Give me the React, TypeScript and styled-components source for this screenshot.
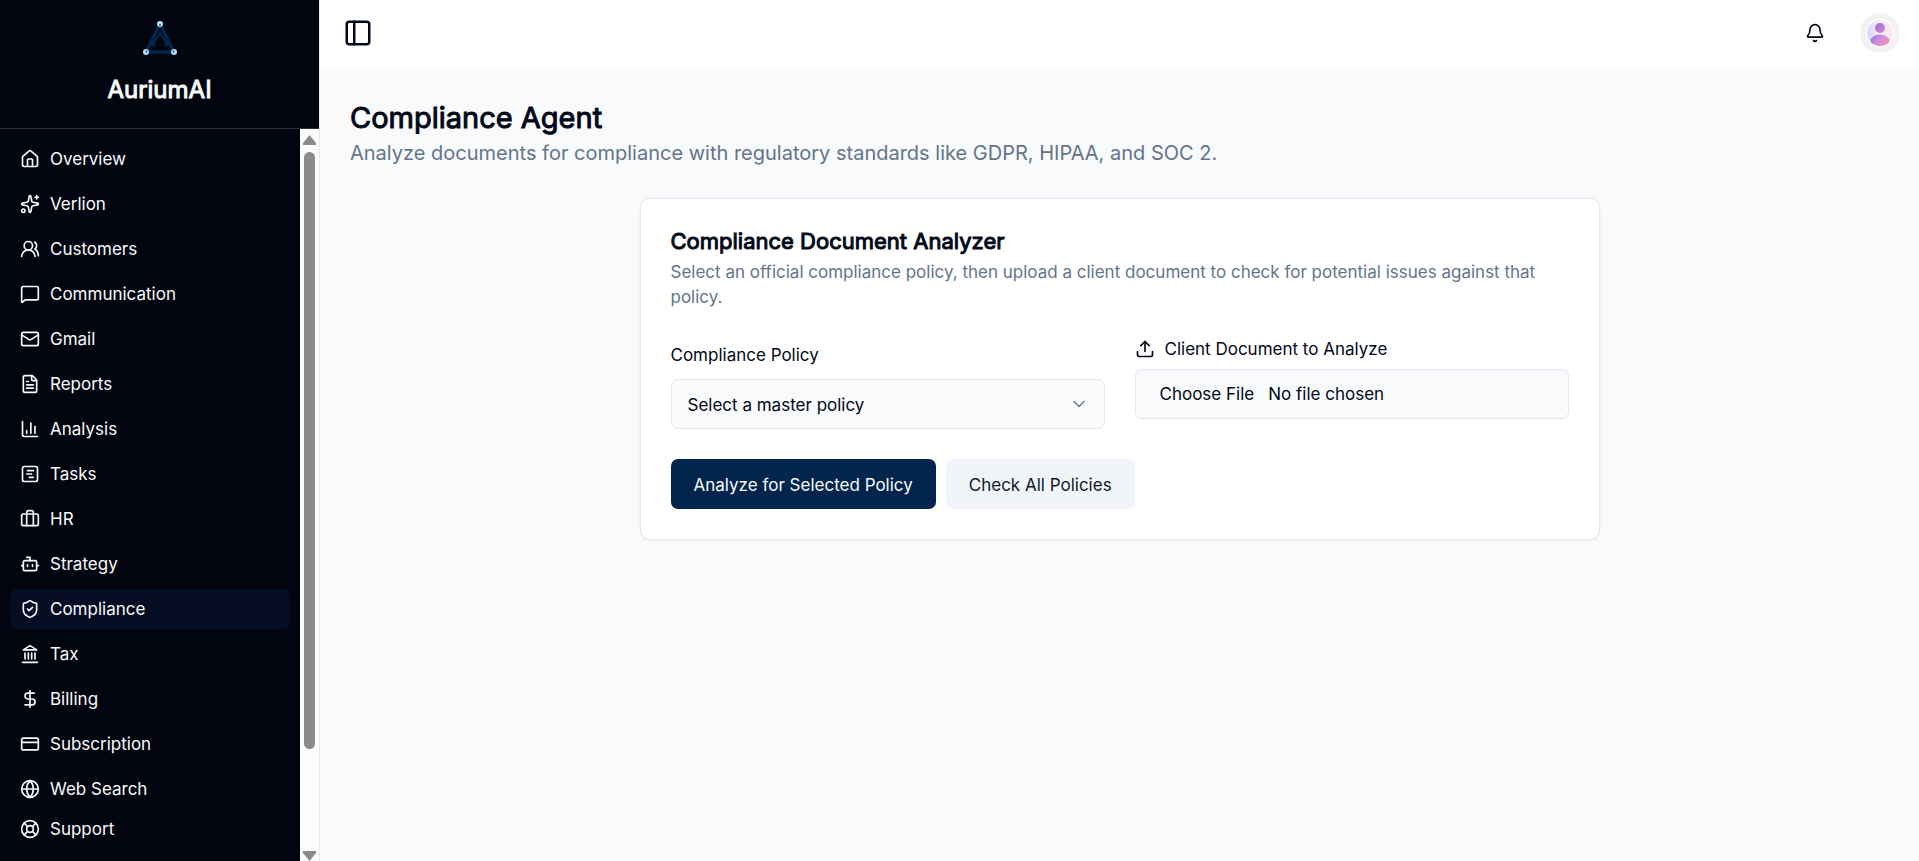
import React from "react";
import styled, { createGlobalStyle, css } from "styled-components";
import {
  Bell,
  Bot,
  Briefcase,
  ChartColumn,
  ChevronDown,
  CreditCard,
  DollarSign,
  FileText,
  Globe,
  House,
  LifeBuoy,
  Mail,
  MessageSquare,
  PanelLeft,
  ShieldCheck,
  Sparkles,
  SquareChartGantt,
  Upload,
  UsersRound,
} from "lucide-react";

const color = {
  ink: "#020817",
  muted: "#64748b",
  line: "#e2e8f0",
  page: "#f8fafc",
  navy: "#00254d",
  soft: "#f1f5f9",
  sidebar: "#02050f",
  active: "#050d22",
};

/* Headings are the regular cut thickened by an outline. */
const headingWeight = css`
  font-weight: 400;
  -webkit-text-stroke: 1px currentColor;
`;

const GlobalStyle = createGlobalStyle`
  *, *::before, *::after { box-sizing: border-box; }
  body {
    margin: 0;
    background: ${color.page};
    color: ${color.ink};
    font-family: Inter, "Liberation Sans", sans-serif;
    font-size: 17px;
    line-height: 25px;
  }
  button, input, select { font: inherit; color: inherit; }
  h1, h2, p, ul { margin: 0; padding: 0; }
`;

const Shell = styled.div`
  display: flex;
  height: 100vh;
  overflow: hidden;
`;

const Sidebar = styled.aside`
  display: flex;
  flex-direction: column;
  flex: none;
  width: 320px;
  background: ${color.sidebar};
  color: ${color.page};
  border-right: 1px solid ${color.line};
`;

const Brand = styled.div`
  display: flex;
  flex-direction: column;
  align-items: center;
  gap: 12px;
  padding: 20px 0 20px;
  height: 129px;
  flex: none;
  border-bottom: 1px solid #2b2e38;
`;

const BrandName = styled.span`
  font-size: 24px;
  line-height: 36px;
  ${headingWeight}
`;

const SidebarBody = styled.div`
  display: flex;
  flex: 1;
  min-height: 0;
`;

const Nav = styled.nav`
  flex: 1;
  min-width: 0;
  overflow: hidden;
  padding: 10px;
`;

const NavList = styled.ul`
  display: flex;
  flex-direction: column;
  gap: 5px;
  list-style: none;
`;

const NavLink = styled.a<{ $active?: boolean }>`
  display: flex;
  align-items: center;
  gap: 10px;
  height: 40px;
  padding: 0 10px;
  border-radius: 7px;
  line-height: 26px;
  color: inherit;
  text-decoration: none;
  background: ${(p) => (p.$active ? color.active : "transparent")};
`;

const ScrollTrack = styled.div`
  display: flex;
  flex-direction: column;
  align-items: center;
  flex: none;
  width: 19px;
  padding-top: 6px;
  background: #fcfcfc;
`;

const ScrollArrow = styled.svg`
  flex: none;
  width: 13px;
  height: 10px;
  fill: #8b8b8b;
`;

const ScrollThumb = styled.div`
  flex: none;
  width: 11px;
  height: calc(82% + 2px);
  margin: 7px 0 auto;
  border-radius: 6px;
  background: #8b8b8b;
`;

const Content = styled.div`
  display: flex;
  flex-direction: column;
  flex: 1;
  min-width: 0;
`;

const TopBar = styled.header`
  display: flex;
  align-items: center;
  justify-content: space-between;
  height: 67px;
  flex: none;
  padding: 0 19px 1px 23px;
  background: #fff;
`;

const TopActions = styled.div`
  display: flex;
  align-items: center;
  gap: 25px;
`;

const IconButton = styled.button<{ $size: number }>`
  display: grid;
  place-items: center;
  width: ${(p) => p.$size}px;
  height: ${(p) => p.$size}px;
  padding: 0;
  border: 0;
  border-radius: 50%;
  background: transparent;
  cursor: pointer;
`;

const Main = styled.main`
  flex: 1;
  padding: 30px;
  overflow: hidden;
`;

const PageTitle = styled.h1`
  font-size: 29px;
  line-height: 42px;
  ${headingWeight}
`;

const PageLead = styled.p`
  font-size: 20px;
  line-height: 28px;
  color: ${color.muted};
`;

const Card = styled.section`
  max-width: 960px;
  margin: 31px auto 0;
  padding: 30px;
  border: 1px solid ${color.line};
  border-radius: 10px;
  background: #fff;
  box-shadow: 0 1px 3px rgba(0, 0, 0, 0.06);
`;

const CardTitle = styled.h2`
  font-size: 22px;
  line-height: 24px;
  ${headingWeight}
`;

const CardText = styled.p`
  margin-top: 7px;
  color: ${color.muted};
`;

const Fields = styled.div`
  display: grid;
  grid-template-columns: 1fr 1fr;
  align-items: start;
  gap: 30px;
  margin-top: 24px;
`;

const Field = styled.div`
  display: flex;
  flex-direction: column;
`;

const Label = styled.label<{ $height: number; $gap: number }>`
  display: flex;
  align-items: center;
  gap: 10px;
  height: ${(p) => p.$height}px;
  margin-bottom: ${(p) => p.$gap}px;
`;

const SelectWrap = styled.div`
  display: grid;
  align-items: center;

  > * { grid-area: 1 / 1; }
  > svg {
    justify-self: end;
    margin-right: 16px;
    opacity: 0.5;
    pointer-events: none;
  }
`;

const Select = styled.select`
  appearance: none;
  width: 100%;
  height: 50px;
  padding: 2px 40px 0 16px;
  border: 1px solid ${color.line};
  border-radius: 7px;
  background: ${color.page};
`;

const FileInput = styled.input`
  width: 100%;
  height: 50px;
  padding: 12px 16px 10px;
  border: 1px solid ${color.line};
  border-radius: 7px;
  background: ${color.page};

  &::file-selector-button {
    margin: 0 14px 0 0;
    padding: 0 0 0 8px;
    border: 0;
    background: transparent;
    font: inherit;
    color: inherit;
  }
`;

const Actions = styled.div`
  display: flex;
  gap: 10px;
  margin-top: 30px;
`;

const Button = styled.button<{ $primary?: boolean }>`
  height: 50px;
  padding: 2px 23px 0;
  border: 0;
  border-radius: 7px;
  background: ${(p) => (p.$primary ? color.navy : color.soft)};
  color: ${(p) => (p.$primary ? color.page : "#0f172a")};
  cursor: pointer;
`;

const Logo = () => (
  <svg width="40" height="40" viewBox="0 0 40 40" fill="none" aria-hidden="true">
    <path d="M20 4 L6 32 H34 Z" stroke="#00274f" strokeWidth="3.5" strokeLinejoin="round" />
    <path d="M13 24 L20 13 L27 24" stroke="#00274f" strokeWidth="2" />
    <circle cx="13" cy="24" r="2.2" fill="#00274f" />
    <circle cx="27" cy="24" r="2.2" fill="#00274f" />
    <g fill="#b5dbff">
      <circle cx="20" cy="4" r="3" />
      <circle cx="6" cy="32" r="3" />
      <circle cx="34" cy="32" r="3" />
    </g>
    <g fill="#2b4f78">
      <circle cx="20" cy="5" r="1" />
      <circle cx="6.5" cy="31.5" r="1" />
      <circle cx="33.5" cy="31.5" r="1" />
    </g>
  </svg>
);

const Landmark = ({ size }: { size: number }) => (
  <svg
    width={size}
    height={size}
    viewBox="0 0 24 24"
    fill="none"
    stroke="currentColor"
    strokeWidth="2"
    strokeLinecap="round"
    strokeLinejoin="round"
    aria-hidden="true"
  >
    <path d="M3 22h18M6 18v-7M10 18v-7M14 18v-7M18 18v-7M12 2l8 5H4z" />
  </svg>
);

const Avatar = () => (
  <svg width="40" height="40" viewBox="0 0 40 40" aria-hidden="true">
    <defs>
      <linearGradient id="avatarBack" x1="0" y1="0" x2="1" y2="0">
        <stop offset="0" stopColor="#dcd3fb" />
        <stop offset="0.5" stopColor="#f3effd" />
        <stop offset="1" stopColor="#fbe6f3" />
      </linearGradient>
      <linearGradient id="avatarHead" x1="0" y1="0" x2="1" y2="1">
        <stop offset="0" stopColor="#9a6fe0" />
        <stop offset="1" stopColor="#dc86c0" />
      </linearGradient>
      <linearGradient id="avatarBody" x1="0" y1="0" x2="1" y2="0.4">
        <stop offset="0" stopColor="#8f6be6" />
        <stop offset="0.45" stopColor="#c78be0" />
        <stop offset="1" stopColor="#f08fb8" />
      </linearGradient>
      <clipPath id="avatarClip">
        <circle cx="20" cy="20" r="13" />
      </clipPath>
    </defs>
    <circle cx="20" cy="20" r="20" fill="#f2f2f2" />
    <circle cx="20" cy="20" r="14" fill="#fff" />
    <g clipPath="url(#avatarClip)">
      <circle cx="20" cy="20" r="13" fill="url(#avatarBack)" />
      <ellipse cx="20" cy="28" rx="9.5" ry="6.5" fill="url(#avatarBody)" />
      <path d="M11 31c6 1 8-5 16-7" stroke="#eab4ea" strokeWidth="1" fill="none" opacity="0.5" />
    </g>
    <circle cx="20" cy="15" r="5" fill="url(#avatarHead)" />
  </svg>
);

const items = [
  { label: "Overview", Icon: House },
  { label: "Verlion", Icon: Sparkles },
  { label: "Customers", Icon: UsersRound },
  { label: "Communication", Icon: MessageSquare },
  { label: "Gmail", Icon: Mail },
  { label: "Reports", Icon: FileText },
  { label: "Analysis", Icon: ChartColumn },
  { label: "Tasks", Icon: SquareChartGantt },
  { label: "HR", Icon: Briefcase },
  { label: "Strategy", Icon: Bot },
  { label: "Compliance", Icon: ShieldCheck, active: true },
  { label: "Tax", Icon: Landmark },
  { label: "Billing", Icon: DollarSign },
  { label: "Subscription", Icon: CreditCard },
  { label: "Web Search", Icon: Globe },
];

export default function App() {
  return (
    <Shell>
      <GlobalStyle />
      <Sidebar>
        <Brand>
          <Logo />
          <BrandName>AuriumAI</BrandName>
        </Brand>
        <SidebarBody>
          <Nav aria-label="Main">
            <NavList>
              {items.map(({ label, Icon, active }) => (
                <li key={label}>
                  <NavLink href="#" $active={active} aria-current={active ? "page" : undefined}>
                    <Icon size={20} />
                    {label}
                  </NavLink>
                </li>
              ))}
            </NavList>
            <NavLink href="#">
              <LifeBuoy size={20} />
              Support
            </NavLink>
          </Nav>
          <ScrollTrack aria-hidden="true">
            <ScrollArrow viewBox="0 0 13 10">
              <path d="M6.5 0 L13 8 V10 H0 V8 Z" />
            </ScrollArrow>
            <ScrollThumb />
            <ScrollArrow viewBox="0 0 13 10">
              <path d="M0 0 H13 V2 L6.5 10 L0 2 Z" />
            </ScrollArrow>
          </ScrollTrack>
        </SidebarBody>
      </Sidebar>
      <Content>
        <TopBar>
          <IconButton $size={30} aria-label="Toggle sidebar">
            <PanelLeft size={30} />
          </IconButton>
          <TopActions>
            <IconButton $size={40} aria-label="Notifications">
              <Bell size={20} />
            </IconButton>
            <IconButton $size={40} aria-label="Account">
              <Avatar />
            </IconButton>
          </TopActions>
        </TopBar>
        <Main>
          <PageTitle>Compliance Agent</PageTitle>
          <PageLead>
            Analyze documents for compliance with regulatory standards like GDPR, HIPAA, and SOC 2.
          </PageLead>
          <Card>
            <CardTitle>Compliance Document Analyzer</CardTitle>
            <CardText>
              Select an official compliance policy, then upload a client document to check for
              potential issues against that policy.
            </CardText>
            <Fields>
              <Field>
                <Label htmlFor="policy" $height={42} $gap={3}>
                  Compliance Policy
                </Label>
                <SelectWrap>
                  <Select id="policy" defaultValue="">
                    <option value="">Select a master policy</option>
                  </Select>
                  <ChevronDown size={20} />
                </SelectWrap>
              </Field>
              <Field>
                <Label htmlFor="document" $height={30} $gap={5}>
                  <Upload size={20} />
                  Client Document to Analyze
                </Label>
                <FileInput id="document" type="file" />
              </Field>
            </Fields>
            <Actions>
              <Button type="button" $primary>
                Analyze for Selected Policy
              </Button>
              <Button type="button">Check All Policies</Button>
            </Actions>
          </Card>
        </Main>
      </Content>
    </Shell>
  );
}
